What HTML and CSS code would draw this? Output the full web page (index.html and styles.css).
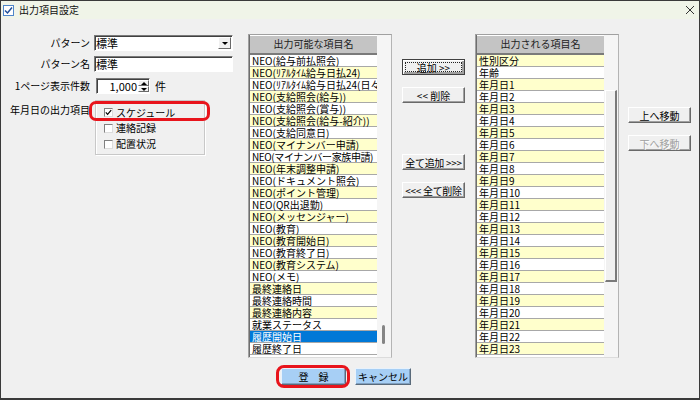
FILE: index.html
```html
<!DOCTYPE html>
<html>
	<head>
		<meta charset="utf-8">
		<title>出力項目設定</title>
		<link rel="stylesheet" href="styles.css">
	</head>
	<body>
		<div class="window">
			<div class="titlebar">
				<svg class="app-icon" viewBox="0 0 11 11">
					<rect x="0.5" y="0.5" width="10" height="10" fill="#fff" stroke="#4f86c9"/>
					<polyline points="2,5.5 4.5,8 9,2.5" fill="none" stroke="#1f4f9a" stroke-width="1.5"/>
				</svg>
				<span class="title">出力項目設定</span>
				<svg class="close" viewBox="0 0 8 8">
					<line x1="0" y1="0" x2="8" y2="8" stroke="#333" stroke-width="1"/>
					<line x1="8" y1="0" x2="0" y2="8" stroke="#333" stroke-width="1"/>
				</svg>
			</div>

			<div class="main">
				<div class="form">
					<div class="form-row row-pattern">
						<label class="label">パターン</label>
						<div class="select">
							<span class="select-text">標準</span>
							<span class="select-btn"><span class="tri-down"></span></span>
						</div>
					</div>
					<div class="form-row row-name">
						<label class="label">パターン名</label>
						<div class="textbox">標準</div>
					</div>
					<div class="form-row row-count">
						<label class="label">1ページ表示件数</label>
						<div class="spinner">
							<span class="spin-value">1,000</span>
							<span class="spin-btns">
								<span class="spin"><span class="tri-up"></span></span>
								<span class="spin"><span class="tri-down"></span></span>
							</span>
						</div>
						<span class="unit">件</span>
					</div>
					<div class="form-row row-dates">
						<label class="label">年月日の出力項目</label>
						<div class="groupbox">
							<div class="check">
								<span class="box">
									<svg viewBox="0 0 7 7"><polyline points="0.8,3.4 2.6,5.4 6.2,1.2" fill="none" stroke="#000" stroke-width="1.2"/></svg>
								</span>
								<span>スケジュール</span>
							</div>
							<div class="check"><span class="box"></span><span>連絡記録</span></div>
							<div class="check"><span class="box"></span><span>配置状況</span></div>
						</div>
					</div>
				</div>

				<div class="listbox">
					<div class="list-col">
						<div class="list-head">出力可能な項目名</div>
						<ul class="list">
							<li class="row">NEO(給与前払照会)</li>
							<li class="row y">NEO(ﾘｱﾙﾀｲﾑ給与日払24)</li>
							<li class="row">NEO(ﾘｱﾙﾀｲﾑ給与日払24(日々</li>
							<li class="row y">NEO(支給照会(給与))</li>
							<li class="row">NEO(支給照会(賞与))</li>
							<li class="row y">NEO(支給照会(給与-紹介))</li>
							<li class="row">NEO(支給同意日)</li>
							<li class="row y">NEO(マイナンバー申請)</li>
							<li class="row tight">NEO(マイナンバー家族申請)</li>
							<li class="row y">NEO(年末調整申請)</li>
							<li class="row">NEO(ドキュメント照会)</li>
							<li class="row y">NEO(ポイント管理)</li>
							<li class="row">NEO(QR出退勤)</li>
							<li class="row y">NEO(メッセンジャー)</li>
							<li class="row">NEO(教育)</li>
							<li class="row y">NEO(教育開始日)</li>
							<li class="row">NEO(教育終了日)</li>
							<li class="row y">NEO(教育システム)</li>
							<li class="row">NEO(メモ)</li>
							<li class="row y">最終連絡日</li>
							<li class="row">最終連絡時間</li>
							<li class="row y">最終連絡内容</li>
							<li class="row">就業ステータス</li>
							<li class="row selected">履歴開始日</li>
							<li class="row">履歴終了日</li>
						</ul>
					</div>
					<div class="scroll">
						<div class="thumb-thin"></div>
					</div>
				</div>

				<div class="move-btns">
					<button class="btn focus add">追加 &gt;&gt;</button>
					<button class="btn remove">&lt;&lt; 削除</button>
					<button class="btn add-all">全て追加 &gt;&gt;&gt;</button>
					<button class="btn remove-all">&lt;&lt;&lt; 全て削除</button>
				</div>

				<div class="listbox">
					<div class="list-col">
						<div class="list-head">出力される項目名</div>
						<ul class="list">
							<li class="row y">性別区分</li>
							<li class="row">年齢</li>
							<li class="row y">年月日1</li>
							<li class="row">年月日2</li>
							<li class="row y">年月日3</li>
							<li class="row">年月日4</li>
							<li class="row y">年月日5</li>
							<li class="row">年月日6</li>
							<li class="row y">年月日7</li>
							<li class="row">年月日8</li>
							<li class="row y">年月日9</li>
							<li class="row">年月日10</li>
							<li class="row y">年月日11</li>
							<li class="row">年月日12</li>
							<li class="row y">年月日13</li>
							<li class="row">年月日14</li>
							<li class="row y">年月日15</li>
							<li class="row">年月日16</li>
							<li class="row y">年月日17</li>
							<li class="row">年月日18</li>
							<li class="row y">年月日19</li>
							<li class="row">年月日20</li>
							<li class="row y">年月日21</li>
							<li class="row">年月日22</li>
							<li class="row y">年月日23</li>
						</ul>
					</div>
					<div class="scroll">
						<div class="thumb"></div>
					</div>
				</div>

				<div class="order-btns">
					<button class="btn up">上へ移動</button>
					<button class="btn down" disabled>下へ移動</button>
				</div>
			</div>

			<div class="actions">
				<button class="btn blue save">登　録</button>
				<button class="btn blue cancel">キャンセル</button>
			</div>
		</div>
	</body>
</html>
```

FILE: styles.css
```css
* {
	margin: 0;
	padding: 0;
	box-sizing: border-box;
}

ul {
	list-style: none;
}

body {
	font-family: "Noto Sans CJK JP", sans-serif;
	font-size: 10px;
	color: #000;
	background: #fff;
}

.window {
	width: 700px;
	height: 400px;
	border: 1px solid #3a3a3a;
	border-bottom-width: 2px;
	background: #f0f0f0;
	display: flex;
	flex-direction: column;
}

/* タイトルバー */
.titlebar {
	height: 18px;
	background: #f0f4e8;
	display: flex;
	align-items: center;
	padding-left: 2px;
}

.titlebar .app-icon {
	width: 11px;
	height: 11px;
	margin-right: 5px;
}

.titlebar .title {
	flex: 1;
	line-height: 12px;
	color: #111;
}

.titlebar .close {
	width: 8px;
	height: 8px;
	margin-right: 5px;
}

.main {
	display: flex;
	align-items: flex-start;
	padding-top: 15px;
}

/* 左側フォーム */
.form {
	width: 247px;
}

.form-row {
	display: flex;
	align-items: center;
	height: 16px;
}

.form-row .label {
	width: 89px;
	margin-right: 4px;
	text-align: right;
	white-space: nowrap;
	line-height: 12px;
}

.row-pattern {
	margin-top: 1px;
}

.row-name {
	margin-top: 5px;
}

.row-count {
	margin-top: 6px;
}

.row-dates {
	margin-top: 6px;
	height: auto;
	align-items: flex-start;
}

.row-dates .label {
	margin-top: 4px;
}

.select,
.textbox,
.spinner {
	height: 16px;
	background: #fff;
	border: 1px solid;
	border-color: #7a7a7a #fff #fff #7a7a7a;
	box-shadow: inset 1px 1px 0 #404040;
	font-size: 11px;
	line-height: 14px;
}

.select {
	width: 139px;
	display: flex;
}

.select-text {
	flex: 1;
	padding-left: 1px;
}

.select-btn {
	width: 13px;
	height: 12px;
	margin: 1px 1px 0 0;
	background: #f0f0f0;
	border: 1px solid;
	border-color: #fff #696969 #696969 #fff;
	display: flex;
	align-items: center;
	justify-content: center;
}

.textbox {
	width: 139px;
	padding-left: 1px;
}

.spinner {
	width: 54px;
	margin-left: 2px;
	display: flex;
}

.spin-value {
	flex: 1;
	text-align: right;
	padding-right: 1px;
}

.spin-btns {
	width: 11px;
	display: flex;
	flex-direction: column;
	padding: 1px 0;
}

.spin {
	flex: 1;
	background: #f0f0f0;
	border: 1px solid;
	border-color: #fff #696969 #696969 #fff;
	display: flex;
	align-items: center;
	justify-content: center;
}

.tri-down {
	width: 0;
	height: 0;
	border-left: 3px solid transparent;
	border-right: 3px solid transparent;
	border-top: 3px solid #000;
}

.tri-up {
	width: 0;
	height: 0;
	border-left: 3px solid transparent;
	border-right: 3px solid transparent;
	border-bottom: 3px solid #000;
}

.unit {
	margin-left: 5px;
	font-size: 11px;
	line-height: 14px;
}

.groupbox {
	position: relative;
	width: 110px;
	height: 55px;
	margin-left: 1px;
	padding: 4px 0 0 8px;
	border: 1px solid #c8c8c8;
	box-shadow: inset 1px 1px 0 #fff, 1px 1px 0 #fff;
}

/* 赤枠の注記 */
.groupbox::after {
	content: "";
	position: absolute;
	box-sizing: border-box;
	left: -7px;
	top: 0;
	width: 121px;
	height: 20px;
	border: 3px solid #e8141c;
	border-radius: 7px;
}

.check {
	display: flex;
	align-items: center;
	height: 16px;
	line-height: 12px;
}

.check:first-child {
	height: 15px;
}

.check .box {
	width: 9px;
	height: 9px;
	margin-right: 3px;
	background: #fff;
	border: 1px solid;
	border-color: #808080 #dcdcdc #dcdcdc #808080;
	display: flex;
}

.check .box svg {
	width: 7px;
	height: 7px;
}

/* リスト */
.listbox {
	width: 144px;
	height: 324px;
	display: flex;
	border: 1px solid;
	border-color: #a0a0a0 #b4b4b4 #dcdcdc #a0a0a0;
}

.list-col {
	width: 128px;
	border-left: 1px solid #6e6e6e;
	background: #fff;
	overflow: hidden;
}

.list-head {
	height: 20px;
	background: #c4c4c4;
	border-top: 1px solid #fff;
	border-bottom: 2px solid #7a7a7a;
	text-align: center;
	line-height: 16px;
	color: #222;
}

.list .row {
	height: 12px;
	padding-left: 2px;
	box-shadow: inset 0 -1px 0 #a8a8a8;
	line-height: 12px;
	white-space: nowrap;
	background: #fff;
}

.list .row.tight {
	letter-spacing: -0.4px;
}

.list .row.y {
	background: #ffffcc;
}

.list .row.selected {
	background: #0078d7;
	color: #fff;
}

.scroll {
	width: 14px;
	background: #f5f5f5;
}

.thumb-thin {
	width: 3px;
	height: 19px;
	margin: 290px 0 0 5px;
	background: #858585;
	border-radius: 2px;
}

.thumb {
	width: 12px;
	height: 192px;
	margin: 55px 0 0 1px;
	background: #f0f0f0;
	border-top: 1px solid #fff;
	border-left: 1px solid #fff;
	border-right: 2px solid #7a7a7a;
	border-bottom: 2px solid #7a7a7a;
}

/* ボタン */
.btn {
	height: 16px;
	font-family: inherit;
	font-size: 10px;
	line-height: 13px;
	color: #000;
	text-align: center;
	white-space: nowrap;
	background: #f0f0f0;
	border: 1px solid;
	border-color: #fff #696969 #696969 #fff;
	box-shadow: inset -1px -1px 0 #a0a0a0;
}

.btn.focus {
	border-color: #404040;
	box-shadow: inset 1px 1px 0 #fff, inset -2px -2px 0 #a0a0a0;
	outline: 1px dotted #222;
	outline-offset: -4px;
}

.btn:disabled {
	color: #a0a0a0;
	text-shadow: 1px 1px 0 #fff;
}

.move-btns {
	width: 83px;
	padding-left: 10px;
	display: flex;
	flex-direction: column;
}

.move-btns .btn {
	width: 63px;
}

.move-btns .add {
	margin-top: 25px;
}

.move-btns .remove {
	margin-top: 12px;
}

.move-btns .add-all {
	margin-top: 51px;
	letter-spacing: -0.3px;
}

.move-btns .remove-all {
	margin-top: 12px;
	letter-spacing: -0.3px;
}

.order-btns {
	padding-left: 9px;
	display: flex;
	flex-direction: column;
}

.order-btns .btn {
	width: 63px;
}

.order-btns .up {
	margin-top: 73px;
}

.order-btns .down {
	margin-top: 12px;
}

.actions {
	display: flex;
	align-items: center;
	margin-top: 10px;
	padding-left: 280px;
	gap: 9px;
}

.btn.blue {
	height: 17px;
	background: #a7cff5;
	border-color: #e8f2fc #5a6a7a #5a6a7a #e8f2fc;
	box-shadow: inset -1px -1px 0 #7f9fbf;
}

.actions .save {
	width: 65px;
	position: relative;
}

.actions .save::after {
	content: "";
	position: absolute;
	top: -4px;
	left: -6px;
	right: -5px;
	bottom: -4px;
	border: 3px solid #e8141c;
	border-radius: 8px;
}

.actions .cancel {
	width: 56px;
}
```
